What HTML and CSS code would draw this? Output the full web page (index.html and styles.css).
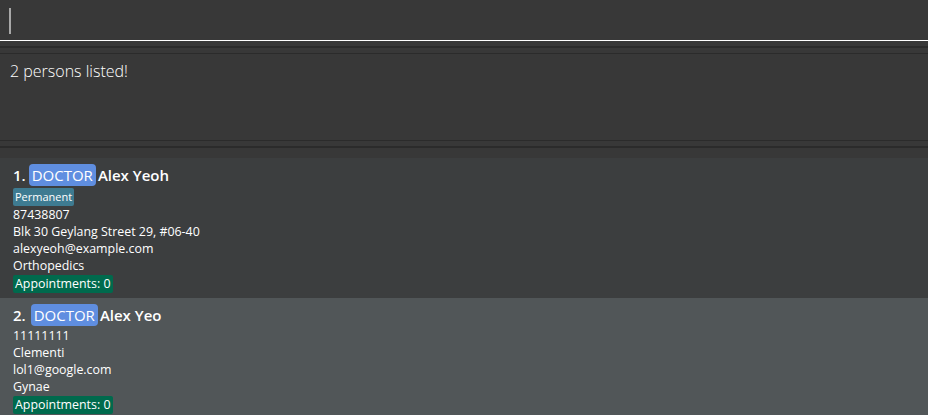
FILE: index.html
```html
<!DOCTYPE html>
<html lang="en">
<head>
    <meta charset="UTF-8">
    <meta name="viewport" content="width=device-width, initial-scale=1.0">
    <title>Clinic Book</title>
    <link rel="stylesheet" href="styles.css">
</head>
<body>
    <div class="command-box">
        <span class="caret"></span>
    </div>
    <div class="divider divider-top"></div>
    <div class="result-box">
        <p class="result-text">2 persons listed!</p>
    </div>
    <div class="divider divider-bottom"></div>

    <ul class="person-list">
        <li class="person-card">
            <div class="card-title">
                <span class="index">1.</span>
                <span class="role">DOCTOR</span>
                <span class="name">Alex Yeoh</span>
            </div>
            <div class="tags">
                <span class="tag tag-status">Permanent</span>
            </div>
            <div class="field">87438807</div>
            <div class="field">Blk 30 Geylang Street 29, #06-40</div>
            <div class="field">alexyeoh@example.com</div>
            <div class="field">Orthopedics</div>
            <div class="tags">
                <span class="tag tag-appt">Appointments: 0</span>
            </div>
        </li>
        <li class="person-card odd">
            <div class="card-title">
                <span class="index">2.</span>
                <span class="role">DOCTOR</span>
                <span class="name">Alex Yeo</span>
            </div>
            <div class="field">11111111</div>
            <div class="field">Clementi</div>
            <div class="field">lol1@google.com</div>
            <div class="field">Gynae</div>
            <div class="tags">
                <span class="tag tag-appt">Appointments: 0</span>
            </div>
        </li>
    </ul>
</body>
</html>
```

FILE: styles.css
```css
body {
    margin: 0;
    background-color: #383838;
    font-family: "Open Sans", "Noto Sans", sans-serif;
    color: #ffffff;
    overflow: hidden;
}
.command-box {
    height: 41px;
    border-bottom: 1px solid #ffffff;
    padding: 8px 0 0 9px;
    box-sizing: border-box;
}
.caret {
    display: block;
    width: 2px;
    height: 26px;
    background-color: #a8a8a8;
}
.divider {
    box-sizing: border-box;
    background-color: #383838;
    margin-top: 5px;
    border-top: 2px solid #2b2b2b;
}
.divider-top {
    height: 8px;
    border-bottom: 1px solid #2b2b2b;
}
.divider-bottom {
    height: 12px;
}
.result-box {
    height: 87px;
    padding: 6px 10px;
    box-sizing: border-box;
    border-bottom: 1px solid #2b2b2b;
}
.result-text {
    margin: 0;
    font-size: 16px;
    font-weight: 300;
    color: #ffffff;
}
.person-list {
    list-style: none;
    margin: 0;
    padding: 0;
}
.person-card {
    background-color: #3c3e3f;
    padding: 6px 13px 5px;
    font-size: 12.4px;
    line-height: 17px;
    color: #ffffff;
}
.person-card.odd {
    background-color: #515658;
}
.card-title {
    display: flex;
    align-items: center;
    gap: 2px;
    font-size: 15px;
    line-height: 22px;
    margin-bottom: 1px;
}
.index {
    font-weight: 600;
    margin-right: 1px;
}
.odd .index {
    margin-right: 3px;
}
.role {
    background-color: #5f8ee0;
    color: #ffffff;
    border-radius: 4px;
    padding: 0 3px;
}
.name {
    font-weight: 600;
}
.tags {
    display: flex;
}
.tag {
    padding: 0 2px;
    border-radius: 2px;
    line-height: 18px;
}
.tag-status {
    background-color: #3e7b91;
    font-size: 11px;
    margin-top: 1px;
}
.tag-appt {
    background-color: #006a4d;
    font-size: 12.4px;
    margin-top: 1px;
}
```
